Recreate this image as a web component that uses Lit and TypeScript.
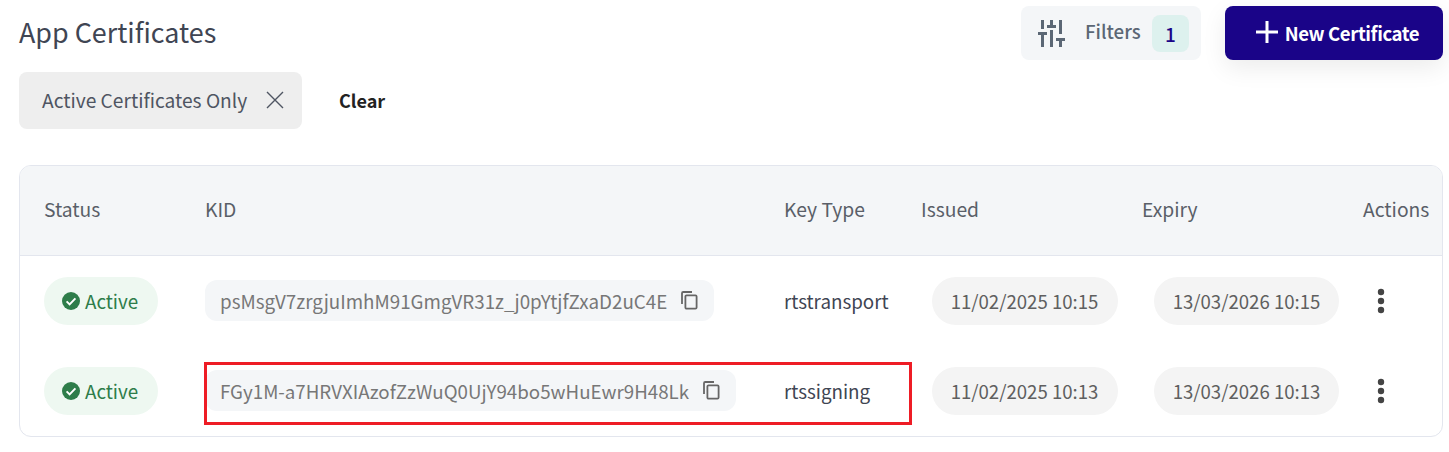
import { LitElement, html, css, svg } from "lit";
import { customElement } from "lit/decorators.js";
import { classMap } from "lit/directives/class-map.js";

const rows = [
  { kid: "psMsgV7zrgjuImhM91GmgVR31z_j0pYtjfZxaD2uC4E", type: "rtstransport", issued: "11/02/2025 10:15", expiry: "13/03/2026 10:15", marked: false },
  { kid: "FGy1M-a7HRVXIAzofZzWuQ0UjY94bo5wHuEwr9H48Lk", type: "rtssigning", issued: "11/02/2025 10:13", expiry: "13/03/2026 10:13", marked: true },
];

const checkIcon = svg`<svg viewBox="0 0 18 18" width="18" height="18"><circle cx="9" cy="9" r="9" fill="#2e7d4a"/><path d="M4.6 9.4l3 3 5.8-6" fill="none" stroke="#fff" stroke-width="2"/></svg>`;
const copyIcon = svg`<svg viewBox="0 0 17 19" width="17" height="19"><path d="M1 13V2.2C1 1.5 1.5 1 2.2 1H11" fill="none" stroke="#666" stroke-width="1.8"/><rect x="4.4" y="4.4" width="11.2" height="13.2" rx="1.2" fill="none" stroke="#666" stroke-width="1.8"/></svg>`;
const kebabIcon = svg`<svg viewBox="0 0 8 26" width="8" height="26"><circle cx="4" cy="4" r="3.2" fill="#444"/><circle cx="4" cy="13" r="3.2" fill="#444"/><circle cx="4" cy="22" r="3.2" fill="#444"/></svg>`;
const filterIcon = svg`<svg viewBox="0 0 27 27" width="27" height="27" fill="none" stroke="#5b6775" stroke-width="3"><path d="M4.500 0v9M0 13.500h9M4.500 13v14M13.500 0v7M9 6.500h9M13.500 10v17M22.500 0v14M18 19.500h9M22.500 19v8"/></svg>`;

@customElement("app-root")
export class AppRoot extends LitElement {
  static styles = css`
    :host {
      display: block;
      box-sizing: border-box;
      width: 1449px;
      height: 452px;
      padding: 6px 6px 0 19px;
      background: #fff;
      font-family: "Noto Sans CJK SC", "Noto Sans", sans-serif;
      overflow: hidden;
    }
    .top {
      display: flex;
      align-items: center;
      gap: 24px;
      height: 54px;
    }
    h1 {
      margin: 0 auto 2px 0;
      font-size: 26.9px;
      font-weight: 400;
      line-height: 52px;
      color: #3f4553;
    }
    .filters {
      display: flex;
      align-items: center;
      box-sizing: border-box;
      width: 180px;
      height: 54px;
      padding: 0 12px 0 17px;
      border-radius: 8px;
      background: #f4f6f8;
      color: #5b6775;
      font-size: 18.7px;
      font-weight: 500;
    }
    .filters span.label {
      margin-left: 20px;
      position: relative;
      top: -3px;
    }
    .count {
      display: flex;
      align-items: center;
      justify-content: center;
      width: 37px;
      height: 37px;
      margin-left: auto;
      border-radius: 8px;
      background: #ddf1ee;
      color: #1a0488;
      font-size: 19px;
      font-weight: 500;
    }
    .new {
      display: flex;
      align-items: center;
      justify-content: center;
      gap: 7px;
      box-sizing: border-box;
      width: 218px;
      height: 54px;
      padding: 0 0 2px 7px;
      border-radius: 8px;
      background: #1a0488;
      color: #fff;
      font-size: 18.6px;
      font-weight: 700;
      letter-spacing: -0.4px;
      box-shadow: 0 8px 24px rgba(0, 0, 0, 0.08);
    }
    .chips {
      display: flex;
      align-items: center;
      gap: 37px;
      margin-top: 12px;
    }
    .chip {
      display: flex;
      align-items: center;
      box-sizing: border-box;
      width: 283px;
      height: 57px;
      padding: 0 0 2px 23px;
      gap: 19px;
      border-radius: 8px;
      background: #eeeeee;
      color: #4f5562;
      font-size: 19.2px;
    }
    .clear {
      padding-bottom: 2px;
      font-size: 18px;
      font-weight: 600;
      color: #222;
    }
    .table {
      box-sizing: border-box;
      width: 1424px;
      height: 272px;
      margin-top: 36px;
      border: 1px solid #e3e6ee;
      border-radius: 12px;
      overflow: hidden;
    }
    .row {
      display: grid;
      grid-template-columns: 161px 580px 136px 221px 221px 1fr;
      align-items: center;
      position: relative;
      height: 90px;
      padding-left: 24px;
      font-size: 18.8px;
    }
    .head {
      height: 90px;
      box-sizing: border-box;
      padding: 0 0 3px 24px;
      background: #f4f6f8;
      border-bottom: 1px solid #e3e6ee;
      color: #5a5f68;
      font-size: 19.3px;
    }
    .head .type-label {
      margin-left: -1px;
    }
    .status {
      display: inline-flex;
      align-items: center;
      gap: 5px;
      justify-self: start;
      box-sizing: border-box;
      width: 114px;
      height: 48px;
      padding-left: 18px;
      border-radius: 24px;
      background: #eef8f1;
      color: #2e7d4a;
    }
    .status span {
      padding-bottom: 2px;
    }
    .kid {
      display: inline-flex;
      align-items: center;
      justify-self: start;
      gap: 14px;
      height: 41px;
      margin-bottom: 1px;
      padding: 0 16px 0 15px;
      border-radius: 12px;
      background: #f4f6f8;
      color: #777;
      font-size: 18.8px;
      white-space: nowrap;
    }
    .kid.marked {
      font-size: 18.72px;
    }
    .kid span {
      padding-bottom: 1px;
    }
    .type {
      margin-left: -1px;
      padding-bottom: 2px;
      color: #3f4553;
    }
    .date {
      justify-self: start;
      display: flex;
      align-items: center;
      justify-content: center;
      box-sizing: border-box;
      width: 186px;
      height: 48px;
      margin-left: 11px;
      padding: 0 1px 2px 0;
      border-radius: 24px;
      background: #f4f4f4;
      color: #5f5f5f;
      font-size: 18.6px;
    }
    .date.expiry {
      width: 185px;
      margin-left: 12px;
      padding: 0 0 2px 0;
    }
    .kebab {
      display: flex;
      margin-left: 14px;
    }
    .mark {
      position: absolute;
      left: 184px;
      top: 16px;
      width: 708px;
      height: 63px;
      box-sizing: border-box;
      border: 3px solid #ee1c25;
    }
  `;

  render() {
    return html`
      <div class="top">
        <h1>App Certificates</h1>
        <div class="filters">
          ${filterIcon}
          <span class="label">Filters</span>
          <span class="count">1</span>
        </div>
        <div class="new">
          <svg viewBox="0 0 22 22" width="22" height="22"><path d="M11 0v22M0 11h22" stroke="#fff" stroke-width="3"/></svg>
          New Certificate
        </div>
      </div>
      <div class="chips">
        <div class="chip">
          Active Certificates Only
          <svg viewBox="0 0 18 18" width="18" height="18"><path d="M1 1l16 16M17 1L1 17" stroke="#4f5562" stroke-width="1.4" fill="none"/></svg>
        </div>
        <div class="clear">Clear</div>
      </div>
      <div class="table">
        <div class="row head">
          <div>Status</div>
          <div>KID</div>
          <div class="type-label">Key Type</div>
          <div>Issued</div>
          <div>Expiry</div>
          <div>Actions</div>
        </div>
        ${rows.map(
          (r) => html`
            <div class="row">
              <div class="status">${checkIcon}<span>Active</span></div>
              <div class=${classMap({ kid: true, marked: r.marked })}><span>${r.kid}</span>${copyIcon}</div>
              <div class="type">${r.type}</div>
              <div class="date">${r.issued}</div>
              <div class="date expiry">${r.expiry}</div>
              <div class="kebab">${kebabIcon}</div>
              ${r.marked ? html`<div class="mark"></div>` : ""}
            </div>
          `
        )}
      </div>
    `;
  }
}
